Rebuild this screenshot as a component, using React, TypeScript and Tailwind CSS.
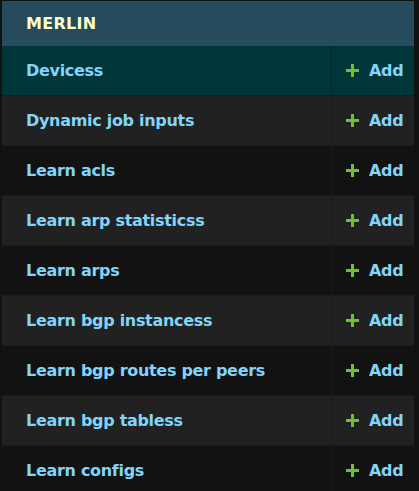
const models = [
    "Devicess",
    "Dynamic job inputs",
    "Learn acls",
    "Learn arp statisticss",
    "Learn arps",
    "Learn bgp instancess",
    "Learn bgp routes per peers",
    "Learn bgp tabless",
    "Learn configs",
];

const PlusIcon = () => (
    <svg width="13" height="13" viewBox="0 0 13 13" className="shrink-0">
        <path d="M5 0h3v5h5v3H8v5H5V8H0V5h5z" fill="#70bf2b" />
    </svg>
);

const App = () => {
    return (
        <div
            className="w-[419px] h-[491px] overflow-hidden bg-[#121212] pt-px pl-[2px] pr-[5px]"
            style={{ fontFamily: "'DejaVu Sans', Verdana, sans-serif" }}
        >
            <div className="w-full">
                <div className="h-[45px] bg-[#264b5d] flex items-center pl-6">
                    <span className="text-[16px] font-bold text-[#ffffcc] tracking-[0.3px]">
                        MERLIN
                    </span>
                </div>
                {models.map((name, idx) => {
                    const bg =
                        idx === 0
                            ? "bg-[#00363a]"
                            : idx % 2 === 1
                            ? "bg-[#212121]"
                            : "bg-[#121212]";
                    return (
                        <div
                            key={name}
                            className={`flex h-[50px] border-b border-[#1b1b1b] ${bg}`}
                        >
                            <div className="flex-1 flex items-center pl-6">
                                <span className="text-[16px] font-bold text-[#81d4fa] tracking-[-0.3px]">
                                    {name}
                                </span>
                            </div>
                            <div className="w-[83px] flex items-center gap-[10px] pl-[14px] border-l border-[#1b1b1b]">
                                <PlusIcon />
                                <span className="text-[16px] font-bold text-[#81d4fa] tracking-[-0.3px]">
                                    Add
                                </span>
                            </div>
                        </div>
                    );
                })}
            </div>
        </div>
    );
};

export default App;
